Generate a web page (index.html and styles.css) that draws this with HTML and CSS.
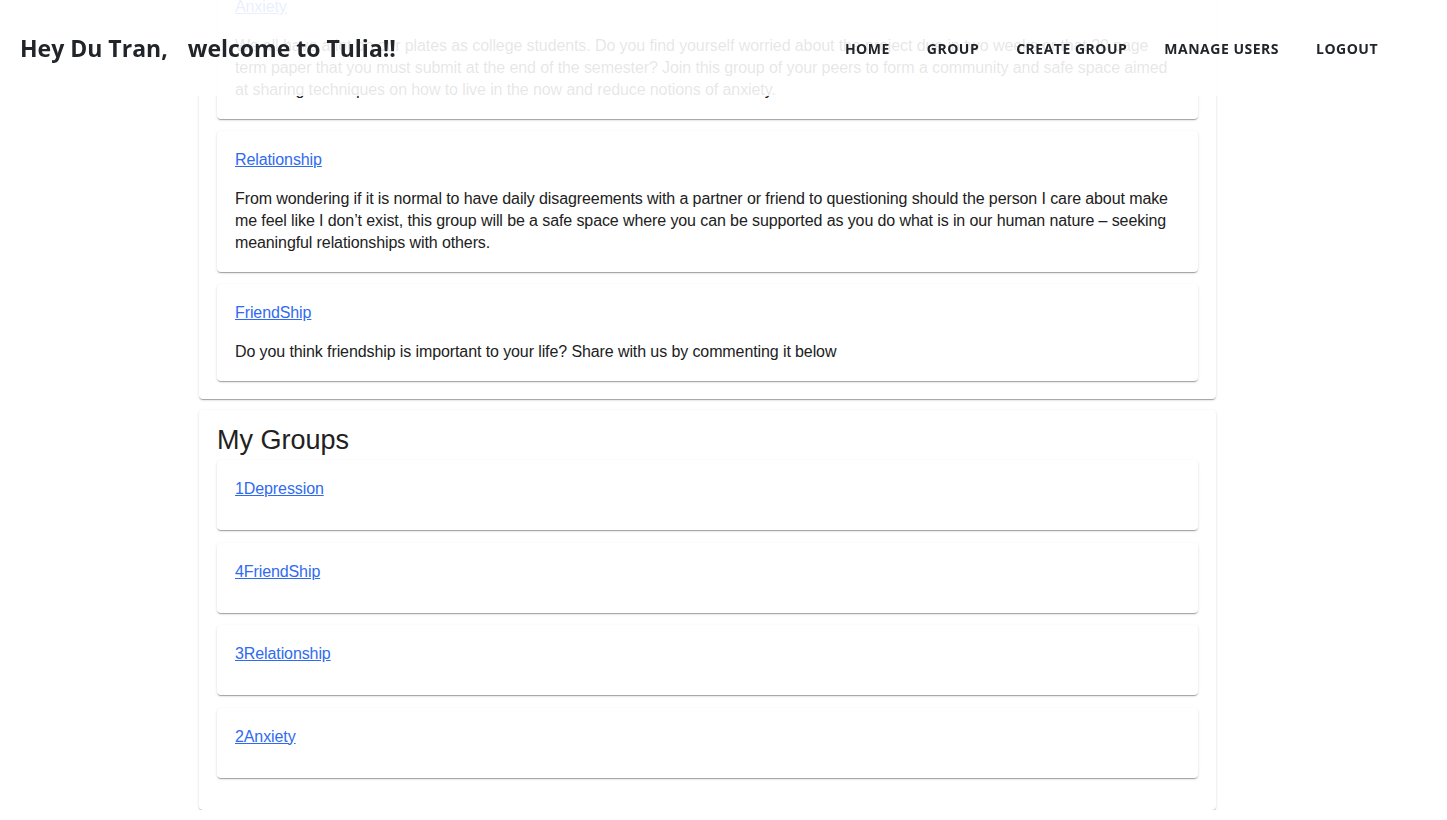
FILE: index.html
```html
<!DOCTYPE html>
<html lang="en">
<head>
<meta charset="utf-8">
<title>Tulia</title>
<link rel="stylesheet" href="styles.css">
</head>
<body>
<header class="topbar">
  <div class="greeting"><span>Hey Du Tran,</span><span>welcome to Tulia!!</span></div>
  <nav class="nav">
    <a href="#">Home</a>
    <a href="#">Group</a>
    <a href="#">Create Group</a>
    <a href="#">Manage Users</a>
    <a href="#">Logout</a>
  </nav>
</header>

<main class="main">
  <section class="panel panel-all">
    <article class="card">
      <a class="card-link" href="#">Anxiety</a>
      <p class="card-text">We all have a lot on our plates as college students. Do you find yourself worried about the project due in two weeks or that 20 page term paper that you must submit at the end of the semester? Join this group of your peers to form a community and safe space aimed at sharing techniques on how to live in the now and reduce notions of anxiety.</p>
    </article>
    <article class="card">
      <a class="card-link" href="#">Relationship</a>
      <p class="card-text">From wondering if it is normal to have daily disagreements with a partner or friend to questioning should the person I care about make me feel like I don’t exist, this group will be a safe space where you can be supported as you do what is in our human nature – seeking meaningful relationships with others.</p>
    </article>
    <article class="card">
      <a class="card-link" href="#">FriendShip</a>
      <p class="card-text">Do you think friendship is important to your life? Share with us by commenting it below</p>
    </article>
  </section>

  <section class="panel panel-mine">
    <h2 class="panel-title">My Groups</h2>
    <article class="card group-card"><a class="card-link" href="#">1Depression</a></article>
    <article class="card group-card"><a class="card-link" href="#">4FriendShip</a></article>
    <article class="card group-card"><a class="card-link" href="#">3Relationship</a></article>
    <article class="card group-card"><a class="card-link" href="#">2Anxiety</a></article>
  </section>
</main>
</body>
</html>
```

FILE: styles.css
```css
html, body {
  margin: 0;
  padding: 0;
  background: #ffffff;
}

body {
  font-family: "Liberation Sans", Arial, sans-serif;
  color: #212121;
  font-size: 16px;
}

.topbar {
  position: fixed;
  top: 0;
  left: 0;
  right: 0;
  height: 96px;
  background: rgba(255, 255, 255, 0.89);
  display: flex;
  align-items: center;
  justify-content: space-between;
  padding: 0 69px 0 20px;
  box-sizing: border-box;
  z-index: 10;
  font-family: "Open Sans", "Noto Sans", sans-serif;
}

.greeting {
  display: flex;
  gap: 20px;
  font-size: 23px;
  font-weight: 700;
  color: #212529;
  white-space: nowrap;
}

.nav {
  display: flex;
  gap: 37px;
}

.nav a {
  color: #212529;
  text-decoration: none;
  text-transform: uppercase;
  font-weight: 700;
  font-size: 14px;
  letter-spacing: 0.5px;
}

.main {
  margin: -40px 0 0 199px;
  width: 1017px;
  display: flex;
  flex-direction: column;
  gap: 11px;
}

.panel {
  background: #fff;
  border-radius: 4px;
  box-shadow: 0 2px 1px -1px rgba(0,0,0,0.2), 0 1px 1px 0 rgba(0,0,0,0.14), 0 1px 3px 0 rgba(0,0,0,0.12);
  display: flex;
  flex-direction: column;
  gap: 12px;
  padding: 18px;
}

.panel-mine {
  padding: 14px 18px 32px;
  gap: 12.5px;
}

.panel-title {
  margin: 0 0 -8.5px;
  font-size: 27px;
  line-height: 32px;
  font-weight: 400;
  color: #212121;
}

.card {
  background: #fff;
  border-radius: 4px;
  box-shadow: 0 2px 1px -1px rgba(0,0,0,0.2), 0 1px 1px 0 rgba(0,0,0,0.14), 0 1px 3px 0 rgba(0,0,0,0.12);
  padding: 18px;
  display: flex;
  flex-direction: column;
  align-items: flex-start;
}

.card-link {
  color: #2f6bef;
  text-decoration: underline;
  line-height: 22px;
  letter-spacing: -0.1px;
}

.card-text {
  margin: 17px 0 0;
  line-height: 22px;
  letter-spacing: -0.1px;
  color: #212121;
}

.group-card {
  padding: 18px 18px 30px;
}
```
